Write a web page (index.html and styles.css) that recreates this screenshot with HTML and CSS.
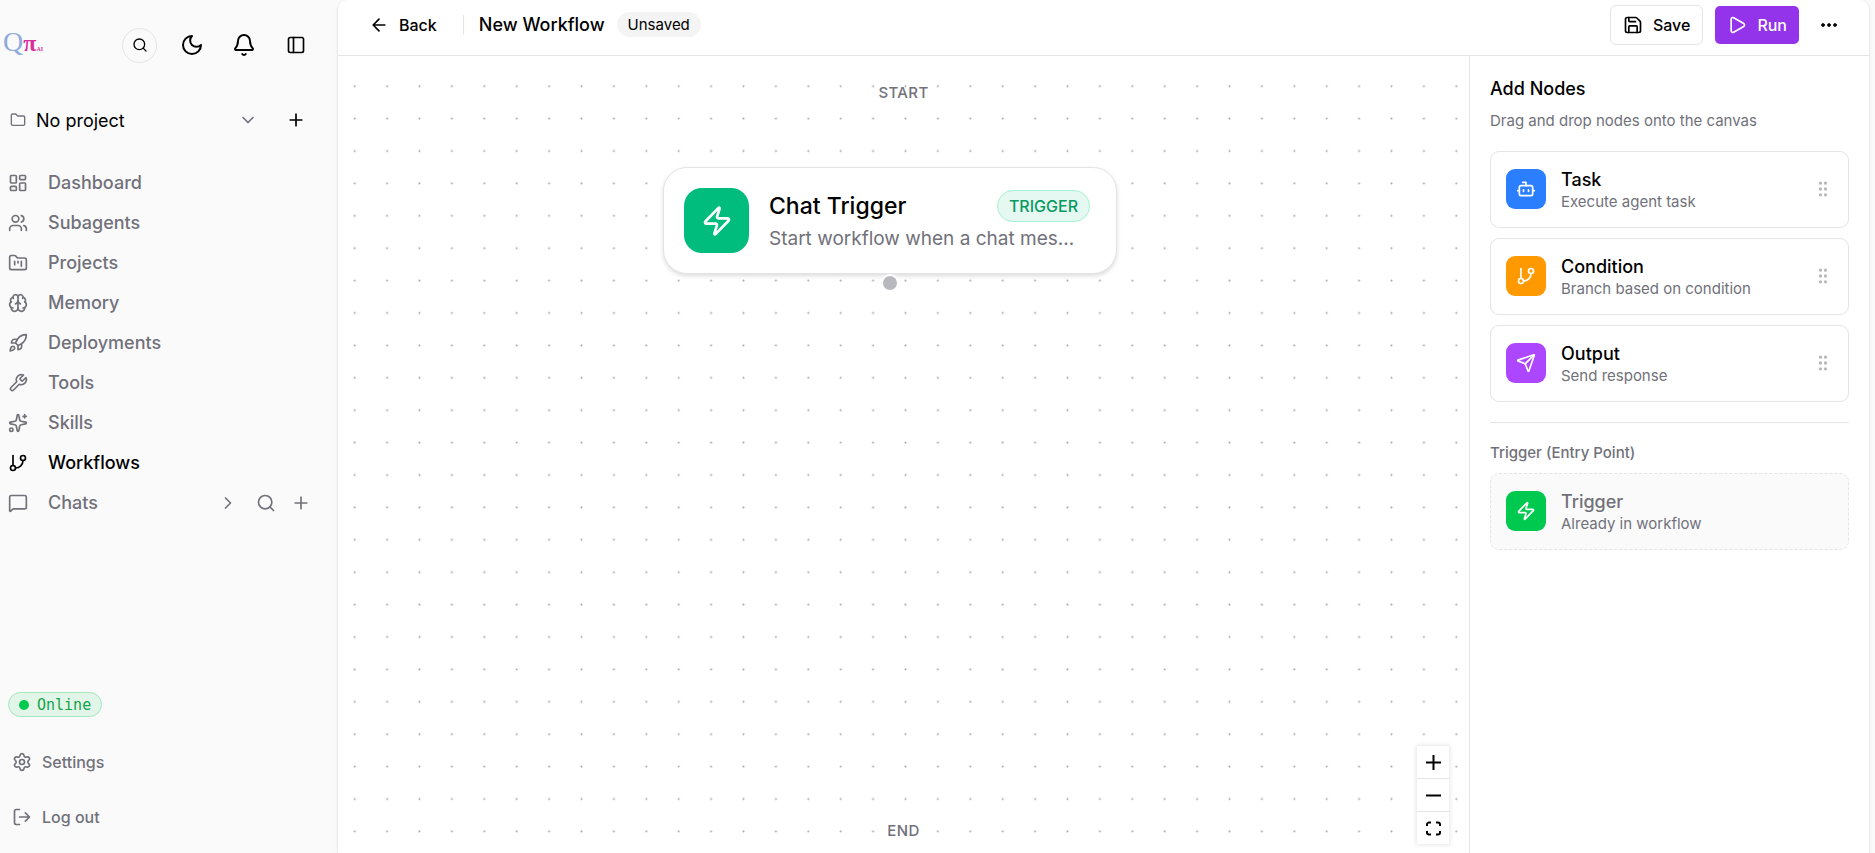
FILE: index.html
```html
<!DOCTYPE html>
<html lang="en">
<head>
<meta charset="utf-8">
<title>New Workflow</title>
<link rel="stylesheet" href="styles.css">
</head>
<body>
<div class="app">
  <aside class="sidebar">
    <div class="brand-row">
      <a class="logo" href="#" aria-label="Qπ AI"><span class="logo-q">Q</span><span class="logo-pi">π</span><span class="logo-ai">AI</span></a>
      <div class="brand-actions">
        <button class="icon-btn round" aria-label="Search"><svg class="icon s16" viewBox="0 0 24 24"><circle cx="11" cy="11" r="8"/><path d="m21 21-4.3-4.3"/></svg></button>
        <button class="icon-btn" aria-label="Dark mode"><svg class="icon s24" viewBox="0 0 24 24"><path d="M12 3a6 6 0 0 0 9 9 9 9 0 1 1-9-9Z"/></svg></button>
        <button class="icon-btn" aria-label="Notifications"><svg class="icon s24" viewBox="0 0 24 24"><path d="M10.268 21a2 2 0 0 0 3.464 0"/><path d="M3.262 15.326A1 1 0 0 0 4 17h16a1 1 0 0 0 .74-1.673C19.41 13.956 18 12.499 18 8A6 6 0 0 0 6 8c0 4.499-1.411 5.956-2.738 7.326"/></svg></button>
        <button class="icon-btn" aria-label="Toggle sidebar"><svg class="icon s20" viewBox="0 0 24 24"><rect width="18" height="18" x="3" y="3" rx="2"/><path d="M9 3v18"/></svg></button>
      </div>
    </div>

    <div class="project-row">
      <button class="project-select">
        <svg class="icon s16 muted" viewBox="0 0 24 24"><path d="M20 20a2 2 0 0 0 2-2V8a2 2 0 0 0-2-2h-7.900a2 2 0 0 1-1.690-.9L9.600 3.900A2 2 0 0 0 7.930 3H4a2 2 0 0 0-2 2v13a2 2 0 0 0 2 2Z"/></svg>
        <span class="project-name">No project</span>
        <svg class="icon s20 muted" viewBox="0 0 24 24"><path d="m6 9 6 6 6-6"/></svg>
      </button>
      <button class="icon-btn" aria-label="New project"><svg class="icon s20" viewBox="0 0 24 24"><path d="M5 12h14M12 5v14"/></svg></button>
    </div>

    <nav class="nav">
      <a class="nav-item" href="#"><svg class="icon s20" viewBox="0 0 24 24"><rect width="7" height="9" x="3" y="3" rx="1"/><rect width="7" height="5" x="14" y="3" rx="1"/><rect width="7" height="9" x="14" y="12" rx="1"/><rect width="7" height="5" x="3" y="16" rx="1"/></svg>Dashboard</a>
      <a class="nav-item" href="#"><svg class="icon s20" viewBox="0 0 24 24"><path d="M16 21v-2a4 4 0 0 0-4-4H6a4 4 0 0 0-4 4v2"/><circle cx="9" cy="7" r="4"/><path d="M22 21v-2a4 4 0 0 0-3-3.870"/><path d="M16 3.130a4 4 0 0 1 0 7.750"/></svg>Subagents</a>
      <a class="nav-item" href="#"><svg class="icon s20" viewBox="0 0 24 24"><path d="M4 20h16a2 2 0 0 0 2-2V8a2 2 0 0 0-2-2h-7.930a2 2 0 0 1-1.660-.9l-.82-1.200A2 2 0 0 0 7.930 3H4a2 2 0 0 0-2 2v13c0 1.100.9 2 2 2Z"/><path d="M8 10v4M12 10v2M16 10v6"/></svg>Projects</a>
      <a class="nav-item" href="#"><svg class="icon s20" viewBox="0 0 24 24"><path d="M12 18V5"/><path d="M15 13a4.170 4.170 0 0 1-3-4 4.170 4.170 0 0 1-3 4"/><path d="M17.598 6.500A3 3 0 1 0 12 5a3 3 0 1 0-5.598 1.500"/><path d="M17.997 5.125a4 4 0 0 1 2.526 5.770"/><path d="M18 18a4 4 0 0 0 2-7.464"/><path d="M19.967 17.483A4 4 0 1 1 12 18a4 4 0 1 1-7.967-.517"/><path d="M6 18a4 4 0 0 1-2-7.464"/><path d="M6.003 5.125a4 4 0 0 0-2.526 5.770"/></svg>Memory</a>
      <a class="nav-item" href="#"><svg class="icon s20" viewBox="0 0 24 24"><path d="M4.500 16.500c-1.500 1.260-2 5-2 5s3.740-.5 5-2c.71-.84.7-2.130-.09-2.910a2.180 2.180 0 0 0-2.910-.09z"/><path d="m12 15-3-3a22 22 0 0 1 2-3.950A12.880 12.880 0 0 1 22 2c0 2.720-.78 7.500-6 11a22.350 22.350 0 0 1-4 2z"/><path d="M9 12H4s.55-3.030 2-4c1.620-1.080 5 0 5 0"/><path d="M12 15v5s3.030-.55 4-2c1.080-1.620 0-5 0-5"/></svg>Deployments</a>
      <a class="nav-item" href="#"><svg class="icon s20" viewBox="0 0 24 24"><path d="M14.700 6.300a1 1 0 0 0 0 1.400l1.600 1.600a1 1 0 0 0 1.400 0l3.770-3.770a6 6 0 0 1-7.940 7.940l-6.910 6.910a2.120 2.120 0 0 1-3-3l6.910-6.910a6 6 0 0 1 7.940-7.940l-3.760 3.760z"/></svg>Tools</a>
      <a class="nav-item" href="#"><svg class="icon s20" viewBox="0 0 24 24"><path d="M11.017 2.814a1 1 0 0 1 1.966 0l1.051 5.558a2 2 0 0 0 1.594 1.594l5.558 1.051a1 1 0 0 1 0 1.966l-5.558 1.051a2 2 0 0 0-1.594 1.594l-1.051 5.558a1 1 0 0 1-1.966 0l-1.051-5.558a2 2 0 0 0-1.594-1.594l-5.558-1.051a1 1 0 0 1 0-1.966l5.558-1.051a2 2 0 0 0 1.594-1.594z"/><path d="M20 2v4M22 4h-4"/><circle cx="4" cy="20" r="2"/></svg>Skills</a>
      <a class="nav-item active" href="#" aria-current="page"><svg class="icon s20" viewBox="0 0 24 24"><path d="M6 3v12"/><circle cx="18" cy="6" r="3"/><circle cx="6" cy="18" r="3"/><path d="M18 9a9 9 0 0 1-9 9"/></svg>Workflows</a>
      <div class="chat-row">
        <a class="nav-item" href="#"><svg class="icon s20" viewBox="0 0 24 24"><path d="M22 17a2 2 0 0 1-2 2H6.828a2 2 0 0 0-1.414.586l-2.202 2.202A.71.71 0 0 1 2 21.286V5a2 2 0 0 1 2-2h16a2 2 0 0 1 2 2z"/></svg>Chats</a>
        <div class="chat-actions">
          <button class="mini-btn expand" aria-label="Expand chats"><svg class="icon s20" viewBox="0 0 24 24"><path d="m9 18 6-6-6-6"/></svg></button>
          <button class="mini-btn" aria-label="Search chats"><svg class="icon s20" viewBox="0 0 24 24"><circle cx="11" cy="11" r="8"/><path d="m21 21-4.300-4.300"/></svg></button>
          <button class="mini-btn" aria-label="New chat"><svg class="icon s20" viewBox="0 0 24 24"><path d="M5 12h14M12 5v14"/></svg></button>
        </div>
      </div>
    </nav>

    <div class="sidebar-foot">
      <div class="status"><span class="status-dot"></span>Online</div>
      <a class="foot-item" href="#"><svg class="icon s20" viewBox="0 0 24 24"><path d="M9.671 4.136a2.340 2.340 0 0 1 4.659 0 2.340 2.340 0 0 0 3.319 1.915 2.340 2.340 0 0 1 2.330 4.033 2.340 2.340 0 0 0 0 3.831 2.340 2.340 0 0 1-2.330 4.033 2.340 2.340 0 0 0-3.319 1.915 2.340 2.340 0 0 1-4.659 0 2.340 2.340 0 0 0-3.320-1.915 2.340 2.340 0 0 1-2.330-4.033 2.340 2.340 0 0 0 0-3.831A2.340 2.340 0 0 1 6.350 6.051a2.340 2.340 0 0 0 3.319-1.915"/><circle cx="12" cy="12" r="3"/></svg>Settings</a>
      <a class="foot-item" href="#"><svg class="icon s20" viewBox="0 0 24 24"><path d="m16 17 5-5-5-5M21 12H9M9 21H5a2 2 0 0 1-2-2V5a2 2 0 0 1 2-2h4"/></svg>Log out</a>
    </div>
  </aside>

  <main class="main">
    <header class="topbar">
      <button class="back"><svg class="icon s20" viewBox="0 0 24 24"><path d="m12 19-7-7 7-7M19 12H5"/></svg>Back</button>
      <span class="separator"></span>
      <h1 class="title">New Workflow</h1>
      <span class="tag">Unsaved</span>
      <div class="top-actions">
        <button class="btn outline"><svg class="icon s20" viewBox="0 0 24 24"><path d="M15.200 3a2 2 0 0 1 1.400.6l3.800 3.800a2 2 0 0 1 .6 1.400V19a2 2 0 0 1-2 2H5a2 2 0 0 1-2-2V5a2 2 0 0 1 2-2z"/><path d="M17 21v-7a1 1 0 0 0-1-1H8a1 1 0 0 0-1 1v7M7 3v4a1 1 0 0 0 1 1h7"/></svg>Save</button>
        <button class="btn primary"><svg class="icon s20" viewBox="0 0 24 24"><path d="M5 5a2 2 0 0 1 3.008-1.728l11.997 6.998a2 2 0 0 1 .003 3.458l-12 7A2 2 0 0 1 5 19z"/></svg>Run</button>
        <button class="icon-btn more" aria-label="More"><svg class="icon s18" viewBox="0 0 24 24"><circle cx="12" cy="12" r="2"/><circle cx="20" cy="12" r="2"/><circle cx="4" cy="12" r="2"/></svg></button>
      </div>
    </header>

    <div class="workspace">
      <section class="canvas" aria-label="Workflow canvas">
        <svg class="grid" aria-hidden="true"><defs><pattern id="dots" x="0.5" y="14" width="32.4" height="32.4" patternUnits="userSpaceOnUse"><circle cx="16.2" cy="16.2" r="1" fill="#a1a1a8"/></pattern></defs><rect width="100%" height="100%" fill="url(#dots)"/></svg>
        <span class="edge-label start">START</span>
        <article class="node">
          <span class="node-icon"><svg class="icon s32" viewBox="0 0 24 24"><path d="M4 14a1 1 0 0 1-.78-1.630l9.900-10.200a.5.5 0 0 1 .86.46l-1.920 6.020A1 1 0 0 0 13 10h7a1 1 0 0 1 .78 1.630l-9.900 10.200a.5.5 0 0 1-.86-.46l1.920-6.020A1 1 0 0 0 11 14z"/></svg></span>
          <div class="node-body">
            <div class="node-head"><h2 class="node-title">Chat Trigger</h2><span class="node-tag">TRIGGER</span></div>
            <p class="node-text">Start workflow when a chat mes...</p>
          </div>
          <span class="handle"></span>
        </article>
        <span class="edge-label end">END</span>
        <div class="controls">
          <button class="control" aria-label="Zoom in"><svg viewBox="0 0 15 15"><path d="M0 7.500h15M7.500 0v15"/></svg></button>
          <button class="control" aria-label="Zoom out"><svg viewBox="0 0 15 15"><path d="M0 7.500h15"/></svg></button>
          <button class="control" aria-label="Fit view"><svg viewBox="0 0 15 15"><path d="M1 5V3.500a2 2 0 0 1 2-2h2M10 1.500h2a2 2 0 0 1 2 2V5M14 10v1.500a2 2 0 0 1-2 2h-2M5 13.500H3a2 2 0 0 1-2-2V10"/></svg></button>
        </div>
      </section>

      <aside class="palette">
        <h2 class="palette-title">Add Nodes</h2>
        <p class="palette-hint">Drag and drop nodes onto the canvas</p>
        <div class="cards">
          <div class="card" draggable="true">
            <span class="card-icon blue"><svg class="icon s20" viewBox="0 0 24 24"><path d="M12 8V4H8"/><rect width="16" height="12" x="4" y="8" rx="2"/><path d="M2 14h2M20 14h2M15 13v2M9 13v2"/></svg></span>
            <div class="card-body"><h3 class="card-title">Task</h3><p class="card-text">Execute agent task</p></div>
            <svg class="icon s20 grip" viewBox="0 0 24 24"><circle cx="9" cy="12" r="1"/><circle cx="9" cy="5" r="1"/><circle cx="9" cy="19" r="1"/><circle cx="15" cy="12" r="1"/><circle cx="15" cy="5" r="1"/><circle cx="15" cy="19" r="1"/></svg>
          </div>
          <div class="card" draggable="true">
            <span class="card-icon orange"><svg class="icon s20" viewBox="0 0 24 24"><path d="M6 3v12"/><circle cx="18" cy="6" r="3"/><circle cx="6" cy="18" r="3"/><path d="M18 9a9 9 0 0 1-9 9"/></svg></span>
            <div class="card-body"><h3 class="card-title">Condition</h3><p class="card-text">Branch based on condition</p></div>
            <svg class="icon s20 grip" viewBox="0 0 24 24"><circle cx="9" cy="12" r="1"/><circle cx="9" cy="5" r="1"/><circle cx="9" cy="19" r="1"/><circle cx="15" cy="12" r="1"/><circle cx="15" cy="5" r="1"/><circle cx="15" cy="19" r="1"/></svg>
          </div>
          <div class="card" draggable="true">
            <span class="card-icon purple"><svg class="icon s20" viewBox="0 0 24 24"><path d="M14.536 21.686a.5.5 0 0 0 .937-.024l6.500-19a.496.496 0 0 0-.635-.635l-19 6.500a.5.5 0 0 0-.024.937l7.930 3.180a2 2 0 0 1 1.112 1.110z"/><path d="m21.854 2.147-10.940 10.939"/></svg></span>
            <div class="card-body"><h3 class="card-title">Output</h3><p class="card-text">Send response</p></div>
            <svg class="icon s20 grip" viewBox="0 0 24 24"><circle cx="9" cy="12" r="1"/><circle cx="9" cy="5" r="1"/><circle cx="9" cy="19" r="1"/><circle cx="15" cy="12" r="1"/><circle cx="15" cy="5" r="1"/><circle cx="15" cy="19" r="1"/></svg>
          </div>
        </div>
        <div class="entry">
          <h3 class="entry-title">Trigger (Entry Point)</h3>
          <div class="card used">
            <span class="card-icon green"><svg class="icon s20" viewBox="0 0 24 24"><path d="M4 14a1 1 0 0 1-.78-1.630l9.900-10.200a.5.5 0 0 1 .86.46l-1.920 6.020A1 1 0 0 0 13 10h7a1 1 0 0 1 .78 1.630l-9.900 10.200a.5.5 0 0 1-.86-.46l1.920-6.020A1 1 0 0 0 11 14z"/></svg></span>
            <div class="card-body"><h3 class="card-title">Trigger</h3><p class="card-text">Already in workflow</p></div>
          </div>
        </div>
      </aside>
    </div>
  </main>
</div>
</body>
</html>
```
FILE: styles.css
```css
* { box-sizing: border-box; margin: 0; padding: 0; }

body {
  font-family: Inter, "Liberation Sans", sans-serif;
  font-size: 18px;
  line-height: 24px;
  color: #000;
  background: #fafafa;
}

button { font: inherit; color: inherit; background: none; border: 0; cursor: pointer; }
a { color: inherit; text-decoration: none; }
h1, h2, h3 { font-weight: 500; }

.icon {
  flex: none;
  display: block;
  fill: none;
  stroke: currentColor;
  stroke-width: 2;
  stroke-linecap: round;
  stroke-linejoin: round;
}
.s16 { width: 16px; height: 16px; }
.s18 { width: 18px; height: 18px; }
.s20 { width: 20px; height: 20px; }
.s24 { width: 24px; height: 24px; }
.s32 { width: 32px; height: 32px; }
.muted { color: #71717a; }

.app { display: flex; height: 100vh; padding-right: 6px; overflow: hidden; }

/* Sidebar */
.sidebar { flex: none; width: 338px; display: flex; flex-direction: column; }
.brand-row { display: flex; align-items: center; justify-content: space-between; height: 90px; padding: 0 25px 0 3px; }
.logo { display: flex; align-items: baseline; font-family: "Liberation Serif", serif; line-height: 40px; }
.logo-q { font-size: 28px; color: #8faadc; }
.logo-pi { font-size: 24px; font-weight: 700; color: #d6309a; }
.logo-ai { font-size: 6px; font-weight: 700; color: #d6309a; }
.brand-actions { display: flex; align-items: center; gap: 17px; }
.icon-btn { flex: none; display: grid; place-items: center; width: 35px; height: 35px; }
.round { border: 1px solid #e4e4e7; border-radius: 50%; }
.project-row { display: flex; align-items: center; gap: 20px; height: 60px; padding: 0 25px 0 10px; }
.project-select { flex: 1; display: flex; align-items: center; gap: 10px; height: 40px; }
.project-name { flex: 1; padding-top: 2px; text-align: left; }

.nav { display: flex; flex-direction: column; padding: 13px 23px 0 8px; color: #71717a; }
.nav-item { display: flex; align-items: center; gap: 20px; height: 40px; font-weight: 500; }
.nav-item.active { color: #000; }
.chat-row { display: flex; align-items: center; justify-content: space-between; }
.chat-actions { display: flex; align-items: center; gap: 7px; }
.mini-btn { display: grid; place-items: center; width: 28px; height: 28px; }
.expand { margin-right: 3px; }

.sidebar-foot { display: flex; flex-direction: column; align-items: flex-start; margin-top: auto; padding: 0 8px 9px; color: #71717a; }
.status {
  display: flex;
  align-items: center;
  gap: 8px;
  height: 25px;
  margin-bottom: 17px;
  padding: 0 10px;
  border: 1px solid #a3e8bc;
  border-radius: 13px;
  background: #e1f6e8;
  color: #16a34a;
  font-family: "DejaVu Sans Mono", monospace;
  font-size: 15px;
}
.status-dot { width: 10px; height: 10px; border-radius: 50%; background: #00c950; }
.foot-item { display: flex; align-items: center; gap: 10px; height: 55px; padding: 0 4px; font-size: 16px; font-weight: 500; }

/* Main panel */
.main {
  flex: 1;
  min-width: 0;
  display: flex;
  flex-direction: column;
  background: #fff;
  border-radius: 9px 9px 0 0;
  box-shadow: 0 1px 3px rgba(0, 0, 0, 0.16);
  overflow: hidden;
}
.topbar { flex: none; display: flex; align-items: center; height: 56px; padding: 0 23px 6px; border-bottom: 1px solid #e4e4e7; }
.back { display: flex; align-items: center; gap: 10px; height: 36px; padding: 0 8px; font-size: 16px; font-weight: 500; }
.separator { width: 1px; height: 20px; margin: 0 15px 0 18px; background: #e4e4e7; }
.title { font-size: 18px; }
.tag { margin-left: 12px; padding: 0 11px; border-radius: 13px; background: #f4f4f5; font-size: 15px; line-height: 25px; }
.top-actions { display: flex; align-items: center; gap: 12px; margin-left: auto; }
.btn { display: flex; align-items: center; gap: 10px; height: 38px; padding: 0 12px; border-radius: 5px; font-size: 16px; font-weight: 500; }
.outline { height: 40px; border: 1px solid #e4e4e7; border-radius: 6px; }
.primary { background: #9333ea; color: #fff; }
.more .icon { fill: currentColor; stroke-width: 1; }

.workspace { flex: 1; min-height: 0; display: flex; }
.canvas { position: relative; flex: 1; min-width: 0; }
.grid { position: absolute; inset: 0; width: 100%; height: 100%; }
.edge-label { position: absolute; left: 0; right: 0; text-align: center; color: #71717a; font-size: 15px; font-weight: 500; letter-spacing: 0.025em; }
.start { top: 25px; }
.end { bottom: 10px; }

.node {
  position: absolute;
  top: 111px;
  left: 325px;
  display: flex;
  align-items: center;
  gap: 20px;
  width: 454px;
  height: 107px;
  padding: 0 26px 0 20px;
  border: 1px solid #e4e4e7;
  border-radius: 24px;
  background: #fff;
  box-shadow: 0 2px 4px rgba(0, 0, 0, 0.14);
}
.node-icon { flex: none; display: grid; place-items: center; width: 65px; height: 65px; border-radius: 18px; background: #00bc7d; color: #fff; }
.node-body { flex: 1; min-width: 0; padding-top: 4px; }
.node-head { display: flex; align-items: center; justify-content: space-between; }
.node-title { font-size: 23px; line-height: 32px; }
.node-tag { padding: 0 11px; border: 1px solid #a4f4cf; border-radius: 16px; background: #e6f8f2; color: #099a62; font-size: 16px; font-weight: 500; line-height: 30px; }
.node-text { white-space: nowrap; color: #71717a; font-size: 19px; line-height: 33px; }
.handle { position: absolute; bottom: -19px; left: 217px; width: 18px; height: 18px; border: 2px solid #fff; border-radius: 50%; background: #b8b8bf; }

.controls { position: absolute; right: 20px; bottom: 9px; width: 32px; box-shadow: 0 0 4px 1px rgba(0, 0, 0, 0.1); }
.control { display: grid; place-items: center; width: 100%; height: 32px; background: #fff; }
.control + .control { height: 33px; border-top: 1px solid #e4e4e7; }
.control svg { width: 15px; height: 15px; fill: none; stroke: #000; stroke-width: 2; }

/* Node palette */
.palette { flex: none; width: 400px; padding: 20px; border-left: 1px solid #e4e4e7; }
.palette-title { font-size: 18px; line-height: 26px; }
.palette-hint { margin: 8px 0 20px; color: #71717a; font-size: 15px; line-height: 21px; }
.cards { display: flex; flex-direction: column; gap: 10px; }
.card { display: flex; align-items: center; gap: 15px; height: 77px; padding: 0 15px 1px; border: 1px solid #e4e4e7; border-radius: 9px; }
.card-icon { flex: none; display: grid; place-items: center; width: 40px; height: 40px; border-radius: 9px; color: #fff; }
.blue { background: #2b7fff; }
.orange { background: #fe9a00; }
.purple { background: #ad46ff; }
.green { background: #00c950; }
.card-body { flex: 1; min-width: 0; padding-top: 4px; }
.card-title { font-size: 18px; line-height: 22px; }
.card-text { color: #71717a; font-size: 15px; line-height: 22px; }
.grip { color: #b8b8bd; }
.entry { margin-top: 20px; padding-top: 19px; border-top: 1px solid #e4e4e7; }
.entry-title { margin-bottom: 9px; color: #71717a; font-size: 15px; line-height: 22px; }
.used { border-style: dashed; background: #fafafa; }
.used .card-title { color: #71717a; }
```
